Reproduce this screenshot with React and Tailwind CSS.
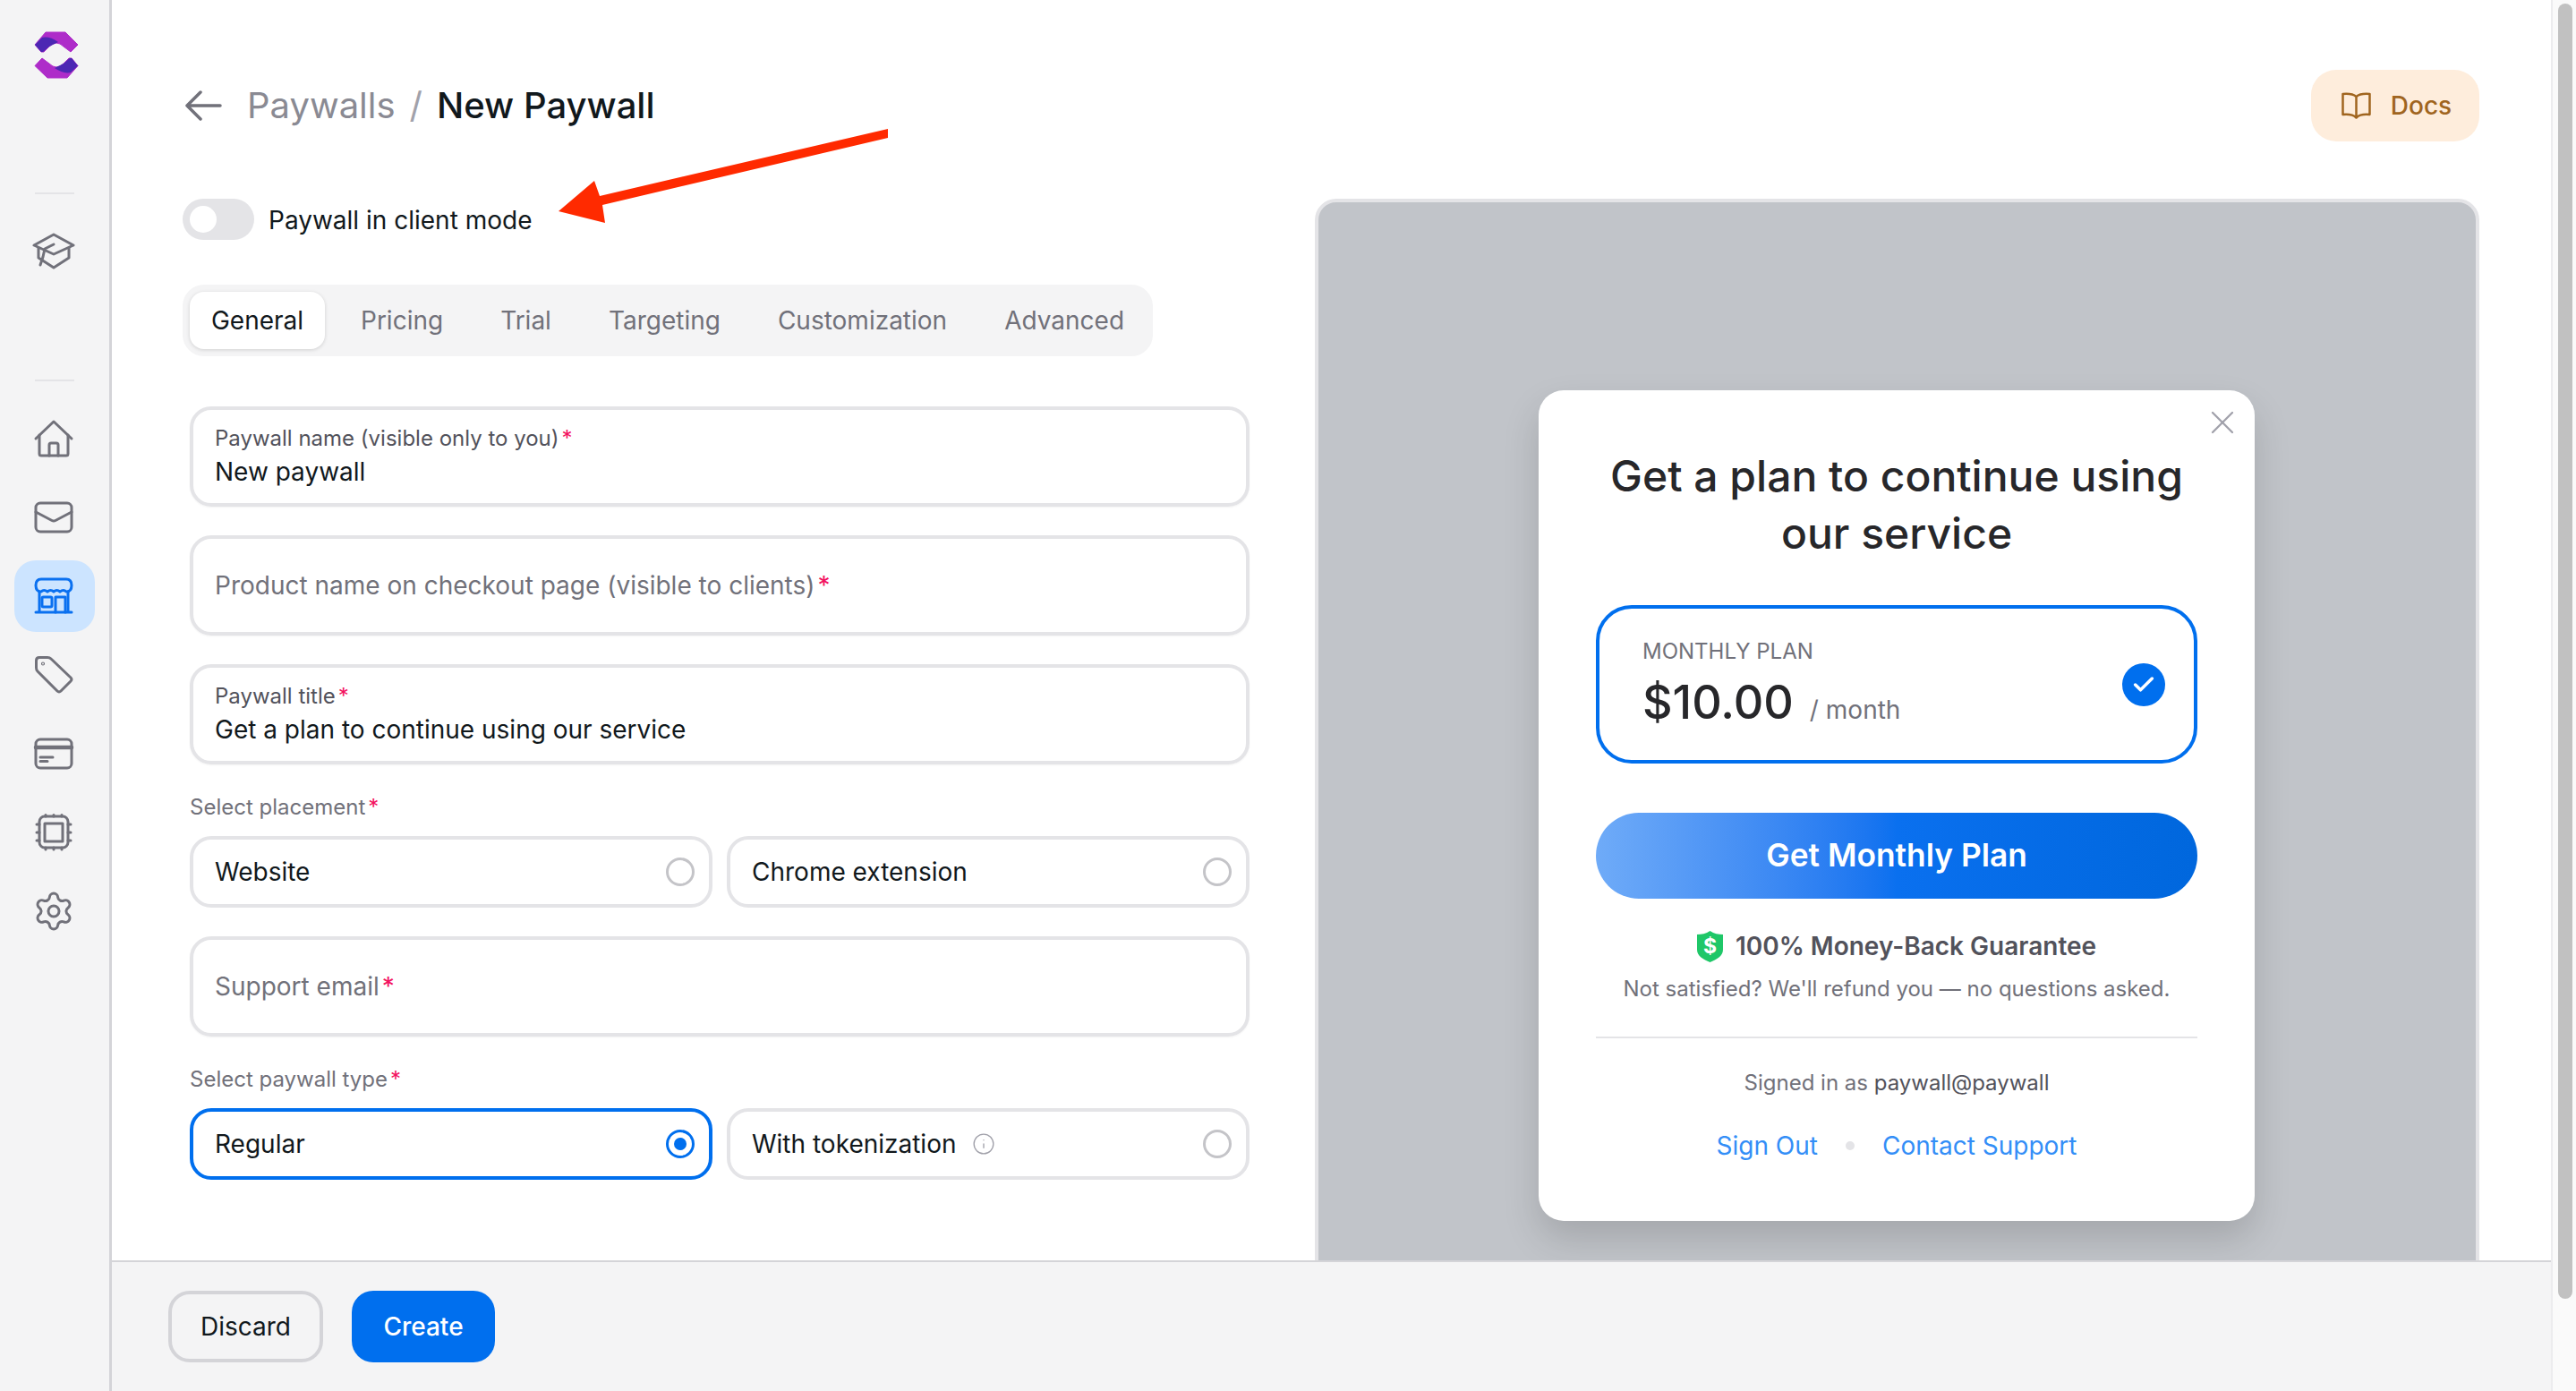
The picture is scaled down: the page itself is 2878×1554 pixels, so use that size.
import { Check, Info, Settings, X } from 'lucide-react';

const Logo = () => (
  <svg width="50" height="53" viewBox="37 35 50 53" className="ml-1">
    <path d="M38 50 L50 36 L72 36 L86 50 L78 58 L70 52 Q62 44 54 52 L48 58 L45 58 Z" fill="#ae2cc9" stroke="#ae2cc9" strokeLinejoin="round" />
    <path d="M38 50 L46 42 Q54 40 64 47 L54 52 L47 58 L45 58 Z" fill="#4c27b3" />
    <path d="M86 73.5 L74 87 L52 87 L38 73.5 L46 65 L54 71 Q62 79 70 71 L76 65 L79 65 Z" fill="#ae2cc9" stroke="#ae2cc9" strokeLinejoin="round" />
    <path d="M86 73.5 L78 81 Q70 83 60 76 L70 71 L77 65 L79 65 Z" fill="#4c27b3" />
  </svg>
);

const Icon = ({ children }) => (
  <svg width="48" height="48" viewBox="0 0 48 48" fill="none" stroke="currentColor" strokeWidth="3" strokeLinecap="round" strokeLinejoin="round">
    {children}
  </svg>
);

const CapIcon = () => (
  <Icon>
    <path d="M2 17 L24 5 L46 17 L24 27 Z" />
    <path d="M7 20 V31 L24 42 L41 31 V20" />
    <path d="M24 16 L14 21 L12 30 L9 39" />
  </Icon>
);
const HomeIcon = () => (
  <Icon>
    <path d="M4 24 L24 5 L44 24" />
    <path d="M8 20 V41 Q8 43 10 43 H38 Q40 43 40 41 V20" />
    <path d="M19 43 V31 Q19 29 21 29 H27 Q29 29 29 31 V43" />
  </Icon>
);
const MailIcon = () => (
  <Icon>
    <rect x="4" y="8" width="40" height="32" rx="5" />
    <path d="M4 18 L22 27.5 Q24 28.5 26 27.5 L44 18" />
  </Icon>
);
const StoreIcon = () => (
  <Icon>
    <path d="M10 5 H38 Q44 5 44 12 Q44 19 38 19 Q35 16 31 19 Q27.5 16 24 19 Q20.5 16 17 19 Q13 16 10 19 Q4 19 4 12 Q4 5 10 5 Z" />
    <path d="M8 19 V42 M40 19 V42 M4 42 H44" />
    <rect x="11" y="25" width="11" height="11" rx="1.5" />
    <path d="M26 42 V25 H37 V42" />
  </Icon>
);
const TagIcon = () => (
  <Icon>
    <path d="M8 4.5 H17 Q19.5 4.5 21 6 L43 27 Q45 29 43 31 L32 42 Q30 44 28 42 L6 20 Q4.5 18.5 4.5 16 V8 Q4.5 4.5 8 4.5 Z" />
    <circle cx="12" cy="11.5" r="0.6" />
  </Icon>
);
const CardIcon = () => (
  <Icon>
    <rect x="4" y="8" width="40" height="32" rx="5" />
    <path d="M4 17 H44" strokeWidth="4.5" />
    <path d="M9 28 H23 M9 32.5 H17" />
  </Icon>
);
const CpuIcon = () => (
  <Icon>
    <rect x="8" y="6" width="32" height="35" rx="6" />
    <rect x="14" y="14" width="20" height="20" />
    <path d="M15 4.5 V6 M24 4.5 V6 M33 4.5 V6 M15 41 V43 M24 41 V43 M33 41 V43 M5 15 H8 M5 24 H8 M5 33 H8 M40 15 H43 M40 24 H43 M40 33 H43" />
  </Icon>
);

const SideItem = ({ active, children }) => (
  <div className={`flex h-20 w-[90px] items-center justify-center rounded-[24px] pr-0.5 ${active ? 'bg-[#cce4ff] text-[#0a70f0]' : 'text-[#71717a]'}`}>
    {children}
  </div>
);

const Sidebar = () => (
  <aside className="flex h-full w-[125px] shrink-0 flex-col items-center border-r-[3px] border-[#d4d4d8] bg-[#f4f4f5] pt-[35px]">
    <Logo />
    <div className="mt-[127px] h-0.5 w-11 bg-[#e4e4e7]" />
    <div className="mt-[24px] flex flex-col items-center">
      <SideItem><CapIcon /></SideItem>
    </div>
    <div className="mt-[103px] h-0.5 w-11 bg-[#e4e4e7]" />
    <div className="mt-6 flex flex-col items-center gap-2">
      <SideItem><HomeIcon /></SideItem>
      <SideItem><MailIcon /></SideItem>
      <SideItem active><StoreIcon /></SideItem>
      <SideItem><TagIcon /></SideItem>
      <SideItem><CardIcon /></SideItem>
      <SideItem><CpuIcon /></SideItem>
      <SideItem><Settings size={48} strokeWidth={1.5} /></SideItem>
    </div>
  </aside>
);

const Req = () => <span className="ml-[3px] text-[#f31260]">*</span>;

const Field = ({ label, value }) => (
  <div className="flex h-[112px] flex-col justify-center rounded-[24px] border-4 border-[#e4e4e7] px-[24px] shadow-[0_1px_2px_rgba(0,0,0,0.05)]">
    {value ? (
      <>
        <div className="text-[24px] leading-[34px] text-[#52525b]">{label}<Req /></div>
        <div className="text-[28px] leading-[40px] text-[#11181c]">{value}</div>
      </>
    ) : (
      <div className="text-[28px] leading-[38px] text-[#71717a]">{label}<Req /></div>
    )}
  </div>
);

const Radio = ({ label, selected, info }) => (
  <div className={`flex h-20 flex-1 items-center justify-between rounded-[24px] border-4 pl-[24px] pr-4 ${selected ? 'border-[#006fee]' : 'border-[#e4e4e7]'}`}>
    <div className="flex items-center gap-[18px] text-[28px] text-[#11181c]">
      {label}
      {info && <Info size={26} strokeWidth={1.25} className="text-[#a1a1aa]" />}
    </div>
    {selected ? (
      <div className="flex h-8 w-8 items-center justify-center rounded-full border-[3px] border-[#006fee]">
        <div className="h-3.5 w-3.5 rounded-full bg-[#006fee]" />
      </div>
    ) : (
      <div className="h-8 w-8 rounded-full border-[3px] border-[#c4c4c8]" />
    )}
  </div>
);

const tabs = ['Pricing', 'Trial', 'Targeting', 'Customization', 'Advanced'];

const Form = () => (
  <div className="w-[1192px] shrink-0">
    <div className="mt-[64px] flex h-[46px] items-center gap-4">
      <div className="flex h-[46px] w-20 items-center rounded-full bg-[#e4e4e7] pl-2">
        <div className="h-[30px] w-[30px] rounded-full bg-white" />
      </div>
      <span className="pt-0.5 text-[28px] text-[#11181c]">Paywall in client mode</span>
    </div>

    <div className="mt-[50px] flex h-20 w-[1084px] items-center rounded-[24px] bg-[#f4f4f5] pl-2 text-[28px] text-[#71717a]">
      <div className="mr-2 flex h-16 w-[151px] shrink-0 items-center justify-center rounded-[16px] bg-white text-[#11181c] shadow-[0_1px_4px_rgba(0,0,0,0.15)]">General</div>
      {tabs.map((t) => (
        <div key={t} className="flex h-16 shrink-0 items-center justify-center px-8">{t}</div>
      ))}
    </div>

    <div className="ml-2 mt-14 flex flex-col gap-8">
      <Field label="Paywall name (visible only to you)" value="New paywall" />
      <Field label="Product name on checkout page (visible to clients)" />
      <Field label="Paywall title" value="Get a plan to continue using our service" />
      <div>
        <div className="mb-4 text-[24px] leading-8 text-[#71717a]">Select placement<Req /></div>
        <div className="flex gap-4">
          <Radio label="Website" />
          <Radio label="Chrome extension" />
        </div>
      </div>
      <Field label="Support email" />
      <div>
        <div className="mb-4 text-[24px] leading-8 text-[#71717a]">Select paywall type<Req /></div>
        <div className="flex gap-4">
          <Radio label="Regular" selected />
          <Radio label="With tokenization" info />
        </div>
      </div>
    </div>
  </div>
);

const Shield = () => (
  <svg width="29" height="35" viewBox="0 0 29 35">
    <path d="M14.5 0 C19 3 24 4 29 4 V21 C29 28 22 32 14.5 35 C7 32 0 28 0 21 V4 C5 4 10 3 14.5 0 Z" fill="#1fc768" />
    <text x="14.5" y="25" textAnchor="middle" fontSize="23" fontWeight="700" fill="#ffffff" fontFamily="Inter, sans-serif">$</text>
  </svg>
);

const Modal = () => (
  <div className="relative mr-px w-[800px] rounded-[28px] bg-white px-[64px] pt-[64px] shadow-[0_20px_40px_rgba(0,0,0,0.15)]">
    <X size={44} strokeWidth={1.25} className="absolute right-[14px] top-[14px] text-[#a1a1aa]" />
    <div className="text-center text-[48px] font-medium leading-[64px] text-[#27272a]">
      Get a plan to continue using<br />our service
    </div>

    <div className="relative mt-[48px] flex h-[177px] flex-col rounded-[40px] border-4 border-[#006fee] pl-[48px] pt-[32px]">
      <div className="text-[24px] leading-8 text-[#71717a]">MONTHLY PLAN</div>
      <div className="mt-[7px] flex items-baseline gap-[18px]">
        <span className="text-[52px] font-medium leading-[68px] text-[#27272a]">$10.00</span>
        <span className="text-[28px] text-[#71717a]">/ month</span>
      </div>
      <div className="absolute right-[32px] top-[61px] flex h-12 w-12 items-center justify-center rounded-full bg-[#006fee] text-white">
        <Check size={28} strokeWidth={3} />
      </div>
    </div>

    <div className="mt-[55px] flex h-[96px] items-center justify-center rounded-full bg-gradient-to-r from-[#6fabf8] via-[#0a70ef] to-[#0067dd] text-[35.3px] font-semibold text-white">
      Get Monthly Plan
    </div>

    <div className="mt-[33px] flex items-center justify-center gap-[14px] text-[28px] font-semibold leading-10 text-[#52525b]">
      <Shield />
      100% Money-Back Guarantee
    </div>
    <div className="mt-[12px] text-center text-[24px] leading-8 text-[#71717a]">
      Not satisfied? We'll refund you — no questions asked.
    </div>

    <div className="mt-[37px] h-0.5 bg-[#e4e4e7]" />

    <div className="mt-[34px] text-center text-[24px] leading-8 text-[#71717a]">
      Signed in as <span className="text-[#52525b]">paywall@paywall</span>
    </div>
    <div className="mt-[35px] flex items-center justify-center gap-[31px] pb-[65px] text-[28px] leading-[38px] text-[#338ef7]">
      <span>Sign Out</span>
      <span className="h-2.5 w-2.5 rounded-full bg-[#e4e4e7]" />
      <span>Contact Support</span>
    </div>
  </div>
);

const Preview = () => (
  <div className="flex h-[1356px] w-[1301px] shrink-0 items-center justify-center rounded-t-[24px] border-4 border-[#e4e4e7] bg-[#c1c4c9]">
    <Modal />
  </div>
);

const Footer = () => (
  <footer className="flex h-[146px] shrink-0 items-center gap-8 border-t-2 border-[#d4d4d8] bg-[#f4f4f5] pl-[63px]">
    <div className="flex h-20 w-[173px] items-center justify-center rounded-[24px] border-4 border-[#d4d4d8] text-[28px] text-[#11181c]">Discard</div>
    <div className="flex h-20 w-40 items-center justify-center rounded-[24px] bg-[#006fee] text-[28px] font-medium text-white">Create</div>
  </footer>
);

export default function App() {
  return (
    <div className="relative flex h-screen w-full overflow-hidden bg-white font-['Inter',sans-serif]">
      <Sidebar />
      <main className="flex min-w-0 flex-1 flex-col border-r-2 border-[#ececee]">
        <div className="min-h-0 flex-1 overflow-hidden pl-[79px] pr-[80px] pt-[78px]">
          <div className="flex h-20 items-center justify-between">
            <div className="flex items-center text-[40px]">
              <svg width="41" height="34" viewBox="0 0 41 34" fill="none" stroke="#71717a" strokeWidth="3.5" strokeLinecap="round" strokeLinejoin="round" className="ml-[3px]">
                <path d="M2 17 H39 M17 2 L2 17 L17 32" />
              </svg>
              <span className="ml-[28px] text-[#8a8a93]">Paywalls</span>
              <span className="mx-4 text-[#a1a1aa]">/</span>
              <span className="font-medium text-[#11181c]">New Paywall</span>
            </div>
            <div className="flex h-20 w-[188px] items-center justify-center gap-[22px] rounded-[28px] bg-[#feeddc] pl-[3px] text-[28px] font-medium text-[#a0651f]">
              <svg width="33" height="30" viewBox="0 0 33 30" fill="none" stroke="currentColor" strokeWidth="2.5" strokeLinejoin="round">
                <path d="M16.5 5 C13 2 7 1.5 1.5 2 V25 C7 24.5 13 25 16.5 28.5 C20 25 26 24.5 31.5 25 V2 C26 1.5 20 2 16.5 5 Z M16.5 5 V28.5" />
              </svg>
              Docs
            </div>
          </div>
          <div className="flex items-start gap-[73px]">
            <Form />
            <div className="pt-[64px]">
              <Preview />
            </div>
          </div>
        </div>
        <Footer />
      </main>
      <div className="w-[26px] shrink-0 bg-[#fafafa] pl-[6px] pt-1">
        <div className="h-[1447px] w-4 rounded-full bg-[#c1c1c1]" />
      </div>

      {/* annotation arrow on top of the page */}
      <svg className="pointer-events-none absolute left-0 top-0" width="2878" height="1554" viewBox="0 0 2878 1554">
        <polygon points="992,144 992,154 673,229 676,249 624,236 664,202 670,219" fill="#ff2a00" />
      </svg>
    </div>
  );
}
